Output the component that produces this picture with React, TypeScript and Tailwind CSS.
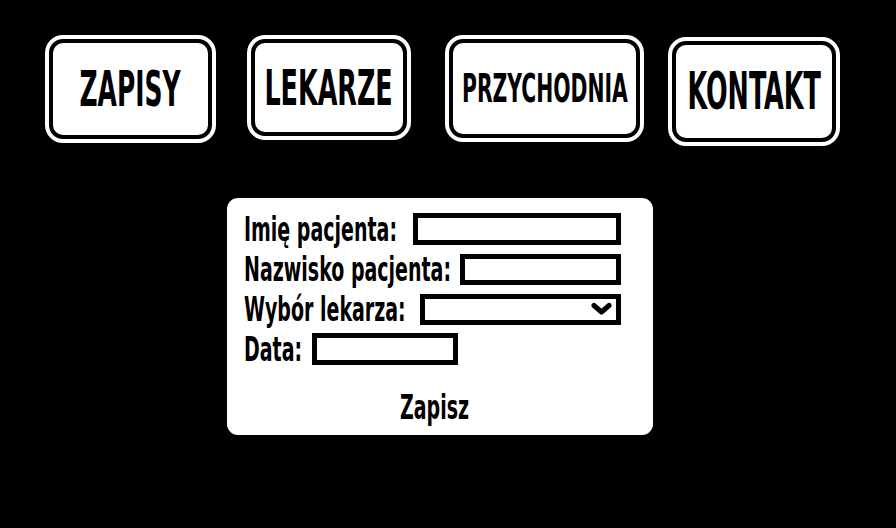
import React from "react";

const font = "font-['DejaVu_Sans_Condensed','Liberation_Sans_Narrow',sans-serif] font-bold";

type NavItem = { label: string; w: string; h: string; ml: string; mt: string; text: string; sx: string };

const navItems: NavItem[] = [
  { label: "ZAPISY", w: "w-[163px]", h: "h-[100px]", ml: "ml-[49px]", mt: "mt-[39px]", text: "text-[50px]", sx: "scale-x-[0.555]" },
  { label: "LEKARZE", w: "w-[156px]", h: "h-[97px]", ml: "ml-[39px]", mt: "mt-[39px]", text: "text-[50px]", sx: "scale-x-[0.565]" },
  { label: "PRZYCHODNIA", w: "w-[191px]", h: "h-[99px]", ml: "ml-[42px]", mt: "mt-[39px]", text: "text-[39px]", sx: "scale-x-[0.58]" },
  { label: "KONTAKT", w: "w-[164px]", h: "h-[101px]", ml: "ml-[32px]", mt: "mt-[41px]", text: "text-[51px]", sx: "scale-x-[0.555]" },
];

function NavButton({ item }: { item: NavItem }) {
  return (
    <a
      href="#"
      className={`${item.w} ${item.h} ${item.ml} ${item.mt} flex items-center justify-center rounded-[14px] border-4 border-black bg-white outline-4 outline-white text-black`}
    >
      <span className={`inline-block whitespace-nowrap leading-none ${item.sx} ${item.text}`}>{item.label}</span>
    </a>
  );
}

function Label({ text, w }: { text: string; w: string }) {
  return (
    <span className={`${w} shrink-0 text-[33px] leading-none text-black`}>
      <span className="inline-block origin-left scale-x-[0.64] whitespace-nowrap">{text}</span>
    </span>
  );
}

export default function App() {
  return (
    <div className={`w-[896px] h-[528px] bg-black overflow-hidden ${font}`}>
      <nav className="flex items-start">
        {navItems.map((item) => (
          <NavButton key={item.label} item={item} />
        ))}
      </nav>

      <form className="ml-[227px] mt-[56px] w-[426px] h-[237px] rounded-[11px] bg-white pl-[17px] pt-[11px]">
        <div className="flex h-[40px] items-center">
          <Label text="Imię pacjenta:" w="w-[169px]" />
          <input className="h-[32px] w-[208px] border-[5px] border-black bg-white outline-none" />
        </div>
        <div className="flex h-[40px] items-center">
          <Label text="Nazwisko pacjenta:" w="w-[216px]" />
          <input className="h-[31px] w-[161px] border-[5px] border-black bg-white outline-none" />
        </div>
        <div className="flex h-[40px] items-center">
          <Label text="Wybór lekarza:" w="w-[176px]" />
          <div className="relative flex h-[31px] w-[201px] items-center justify-end border-[5px] border-black bg-white pr-[4px]">
            <svg width="21" height="14" viewBox="0 0 21 14" fill="none">
              <path d="M3 3.5 L10.5 10 L18 3.5" stroke="black" strokeWidth="5" strokeLinecap="round" strokeLinejoin="round" />
            </svg>
          </div>
        </div>
        <div className="flex h-[40px] items-center">
          <Label text="Data:" w="w-[68px]" />
          <input className="h-[32px] w-[146px] border-[5px] border-black bg-white outline-none" />
        </div>
        <div className="mt-[22px] pl-[156px]">
          <button type="button" className="text-[33px] leading-none text-black">
            <span className="inline-block origin-left scale-x-[0.64]">Zapisz</span>
          </button>
        </div>
      </form>
    </div>
  );
}
